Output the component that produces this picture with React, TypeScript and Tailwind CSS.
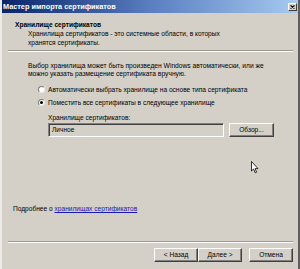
import React from "react";

function Radio({ checked, label }: { checked?: boolean; label: string }) {
  return (
    <div className="flex items-center h-[9px]">
      <span className="w-[7px] h-[7px] rounded-full bg-white border border-t-[#7a7a7a] border-l-[#7a7a7a] border-b-[#e8e8e8] border-r-[#e8e8e8] flex items-center justify-center">
        {checked ? <span className="w-[3px] h-[3px] rounded-full bg-black" /> : null}
      </span>
      <span className="ml-[3px] text-[6.6px] leading-[9px] text-black">{label}</span>
    </div>
  );
}

function Btn({ children, className = "" }: { children: React.ReactNode; className?: string }) {
  return (
    <div
      className={
        "h-[14px] w-[44px] flex items-center justify-center bg-[#d4d0c8] border border-t-white border-l-white border-b-[#404040] border-r-[#404040] shadow-[inset_-1px_-1px_0_#808080] text-[6.6px] leading-[8px] text-black " +
        className
      }
    >
      {children}
    </div>
  );
}

export default function App() {
  return (
    <div className="w-[300px] h-[269px] overflow-hidden bg-[#d4d0c8] font-['Liberation_Sans',Arial,sans-serif] flex flex-col border-l-2 border-l-[#ecebe7] border-r-2 border-r-[#5e5e5e] relative">
      {/* title bar */}
      <div className="h-[13px] bg-linear-to-r from-[#0a246a] via-[#5a7ec0] to-[#a6caf0] flex items-center pl-[1px] pr-[1px] shrink-0">
        <span className="text-white font-bold text-[7.3px] leading-[13px]">Мастер импорта сертификатов</span>
        <div className="ml-auto w-[9px] h-[8px] bg-[#d4d0c8] border border-t-white border-l-white border-b-[#404040] border-r-[#404040] flex items-center justify-center">
          <svg width="5" height="4" viewBox="0 0 5 4">
            <path d="M0.5 0.5 L4.5 3.5 M4.5 0.5 L0.5 3.5" stroke="#000" strokeWidth="1.1" />
          </svg>
        </div>
      </div>

      {/* header */}
      <div className="h-[37px] pt-[7px] shrink-0">
        <div className="pl-[13px] font-bold text-[6.6px] leading-[9px] text-black">Хранилище сертификатов</div>
        <div className="pl-[26px] text-[6.6px] leading-[9px] text-black">
          <div>Хранилища сертификатов - это системные области, в которых</div>
          <div>хранятся сертификаты.</div>
        </div>
      </div>
      <div className="ml-[6px] mr-[5px] h-[2px] border-t border-t-[#9a9893] border-b border-b-white shrink-0" />

      {/* body */}
      <div className="flex-1 flex flex-col pt-[10px]">
        <div className="pl-[26px] text-[6.7px] leading-[8px] text-black">
          <div>Выбор хранилища может быть произведен Windows автоматически, или же</div>
          <div>можно указать размещение сертификата вручную.</div>
        </div>
        <div className="pl-[36px] mt-[7px]">
          <Radio label="Автоматически выбрать хранилище на основе типа сертификата" />
        </div>
        <div className="pl-[36px] mt-[4px]">
          <Radio checked label="Поместить все сертификаты в следующее хранилище" />
        </div>
        <div className="pl-[46px] mt-[7px] text-[6.6px] leading-[8px] text-black">Хранилище сертификатов:</div>
        <div className="pl-[46px] mt-[1px] flex items-center">
          <div className="w-[176px] h-[14px] border border-t-[#808080] border-l-[#808080] border-b-white border-r-white shadow-[inset_1px_1px_0_#404040] flex items-center pl-[3px] text-[6.6px] leading-[8px] text-black">
            Личное
          </div>
          <Btn className="ml-[5px] w-[45px]">Обзор...</Btn>
        </div>

        <div className="mt-auto mb-[28px] pl-[11px] text-[6.6px] leading-[8px] text-black">
          Подробнее о <span className="text-[#1a1ab0] underline">хранилищах сертификатов</span>
        </div>
      </div>

      {/* footer */}
      <div className="ml-[6px] mr-[5px] h-[2px] border-t border-t-[#9a9893] border-b border-b-white shrink-0" />
      <div className="h-[26px] pt-[5px] pr-[5px] flex justify-end shrink-0">
        <Btn>&lt; Назад</Btn>
        <Btn>Далее &gt;</Btn>
        <Btn className="ml-[7px]">Отмена</Btn>
      </div>

      {/* mouse cursor */}
      <svg className="absolute left-[249px] top-[161px]" width="8" height="13" viewBox="0 0 8 13">
        <path d="M0.5 0.5 L0.5 10 L2.6 8 L4.2 11.8 L5.6 11.2 L4.1 7.6 L7 7.6 Z" fill="#fff" stroke="#000" strokeWidth="0.8" strokeLinejoin="round" />
      </svg>
    </div>
  );
}
